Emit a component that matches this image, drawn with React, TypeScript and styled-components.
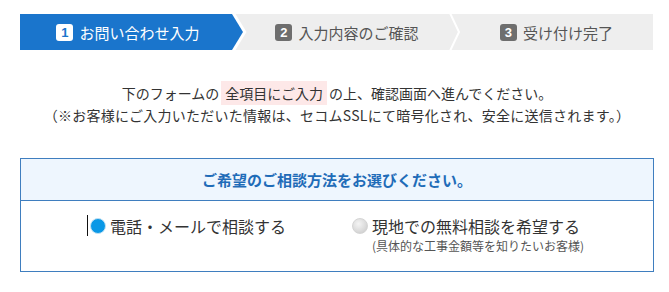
import React from "react";
import styled, { createGlobalStyle } from "styled-components";

const Global = createGlobalStyle`
  html, body { margin: 0; padding: 0; background: #fff; }
  body { font-family: "Noto Sans CJK JP", "Noto Sans", sans-serif; color: #333; }
`;

const Page = styled.div`
  width: 634px;
  padding: 14px 0 0 20px;
`;

const StepBar = styled.ol`
  position: relative;
  list-style: none;
  margin: 0;
  padding: 0;
  width: 633px;
  height: 36px;
  display: grid;
  grid-template-columns: 212px 218px 1fr;
  background: #eeeeee;
`;

const Step = styled.li<{ $active?: boolean; $offset?: number }>`
  display: flex;
  align-items: center;
  justify-content: center;
  gap: 6px;
  padding-left: ${(p) => p.$offset ?? 0}px;
  background: ${(p) => (p.$active ? "#1a75cc" : "transparent")};
  color: ${(p) => (p.$active ? "#fff" : "#555")};
  font-size: 15px;
  line-height: 1;
`;

const Badge = styled.span<{ $active?: boolean }>`
  width: 17px;
  height: 17px;
  border-radius: 3px;
  display: flex;
  align-items: center;
  justify-content: center;
  font-family: "Liberation Sans", Arial, sans-serif;
  font-weight: bold;
  font-size: 13px;
  background: ${(p) => (p.$active ? "#fff" : "#6e6e6e")};
  color: ${(p) => (p.$active ? "#1a75cc" : "#fff")};
`;

const Arrow = styled.svg<{ $left: number }>`
  position: absolute;
  top: 0;
  left: ${(p) => p.$left}px;
  width: 16px;
  height: 36px;
`;

const Intro = styled.div`
  margin-top: 32px;
  text-align: center;
  font-size: 14px;
  line-height: 22px;
  color: #333;
`;

const Wide = styled.span`
  letter-spacing: 0.25px;
`;

const Mark = styled.span`
  background: #fde8e8;
  padding: 2px 4px;
  margin: 0 2px;
`;

const Box = styled.section`
  margin-top: 32px;
  border: 1px solid #3f7ebf;
`;

const BoxHead = styled.h2`
  margin: 0;
  height: 41px;
  display: flex;
  align-items: center;
  justify-content: center;
  background: #eef6fe;
  border-bottom: 1px solid #3f7ebf;
  color: #1f6cb8;
  font-size: 15px;
  font-weight: bold;
`;

const Options = styled.div`
  display: flex;
  justify-content: center;
  align-items: flex-start;
  gap: 66px;
  padding: 15px 0 17px;
`;

const Option = styled.label`
  display: grid;
  grid-template-columns: 16px auto;
  column-gap: 4px;
  align-items: center;
  position: relative;
`;

const Caret = styled.span`
  position: absolute;
  left: -3px;
  top: -1px;
  width: 1px;
  height: 21px;
  background: #111;
`;

const Radio = styled.span<{ $checked?: boolean }>`
  width: 16px;
  height: 16px;
  border-radius: 50%;
  box-sizing: border-box;
  background: ${(p) =>
    p.$checked
      ? "#0a98e6"
      : "radial-gradient(circle at 40% 35%, #f4f4f4 0%, #dadada 60%, #c6c6c6 100%)"};
  border: 1px solid ${(p) => (p.$checked ? "#bfe1f4" : "#d4d4d4")};
`;

const Label = styled.span`
  font-size: 16px;
  line-height: 20px;
  color: #333;
`;

const Note = styled.span`
  grid-column: 2;
  font-size: 12px;
  line-height: 16px;
  margin-top: 2px;
  color: #555;
`;

export default function App() {
  return (
    <>
      <Global />
      <Page>
        <StepBar>
          <Step $active $offset={4}>
            <Badge $active>1</Badge>お問い合わせ入力
          </Step>
          <Step $offset={12}>
            <Badge>2</Badge>入力内容のご確認
          </Step>
          <Step $offset={10}>
            <Badge>3</Badge>受け付け完了
          </Step>
          <Arrow $left={212} viewBox="0 0 16 36">
            <polygon points="0,0 3.5,0 14.5,18 3.5,36 0,36" fill="#fff" />
            <polygon points="0,0 11,18 0,36" fill="#1a75cc" />
          </Arrow>
          <Arrow $left={429} viewBox="0 0 16 36">
            <polyline points="1,-1 10,18 1,37" fill="none" stroke="#fff" strokeWidth="2" />
          </Arrow>
        </StepBar>

        <Intro>
          下のフォームの<Mark>全項目にご入力</Mark>の上、確認画面へ進んでください。
          <br />
          <Wide>（※お客様にご入力いただいた情報は、セコムSSLにて暗号化され、安全に送信されます。）</Wide>
        </Intro>

        <Box>
          <BoxHead>ご希望のご相談方法をお選びください。</BoxHead>
          <Options>
            <Option>
              <Caret />
              <Radio $checked />
              <Label>電話・メールで相談する</Label>
            </Option>
            <Option>
              <Radio />
              <Label>現地での無料相談を希望する</Label>
              <Note>(具体的な工事金額等を知りたいお客様)</Note>
            </Option>
          </Options>
        </Box>
      </Page>
    </>
  );
}
